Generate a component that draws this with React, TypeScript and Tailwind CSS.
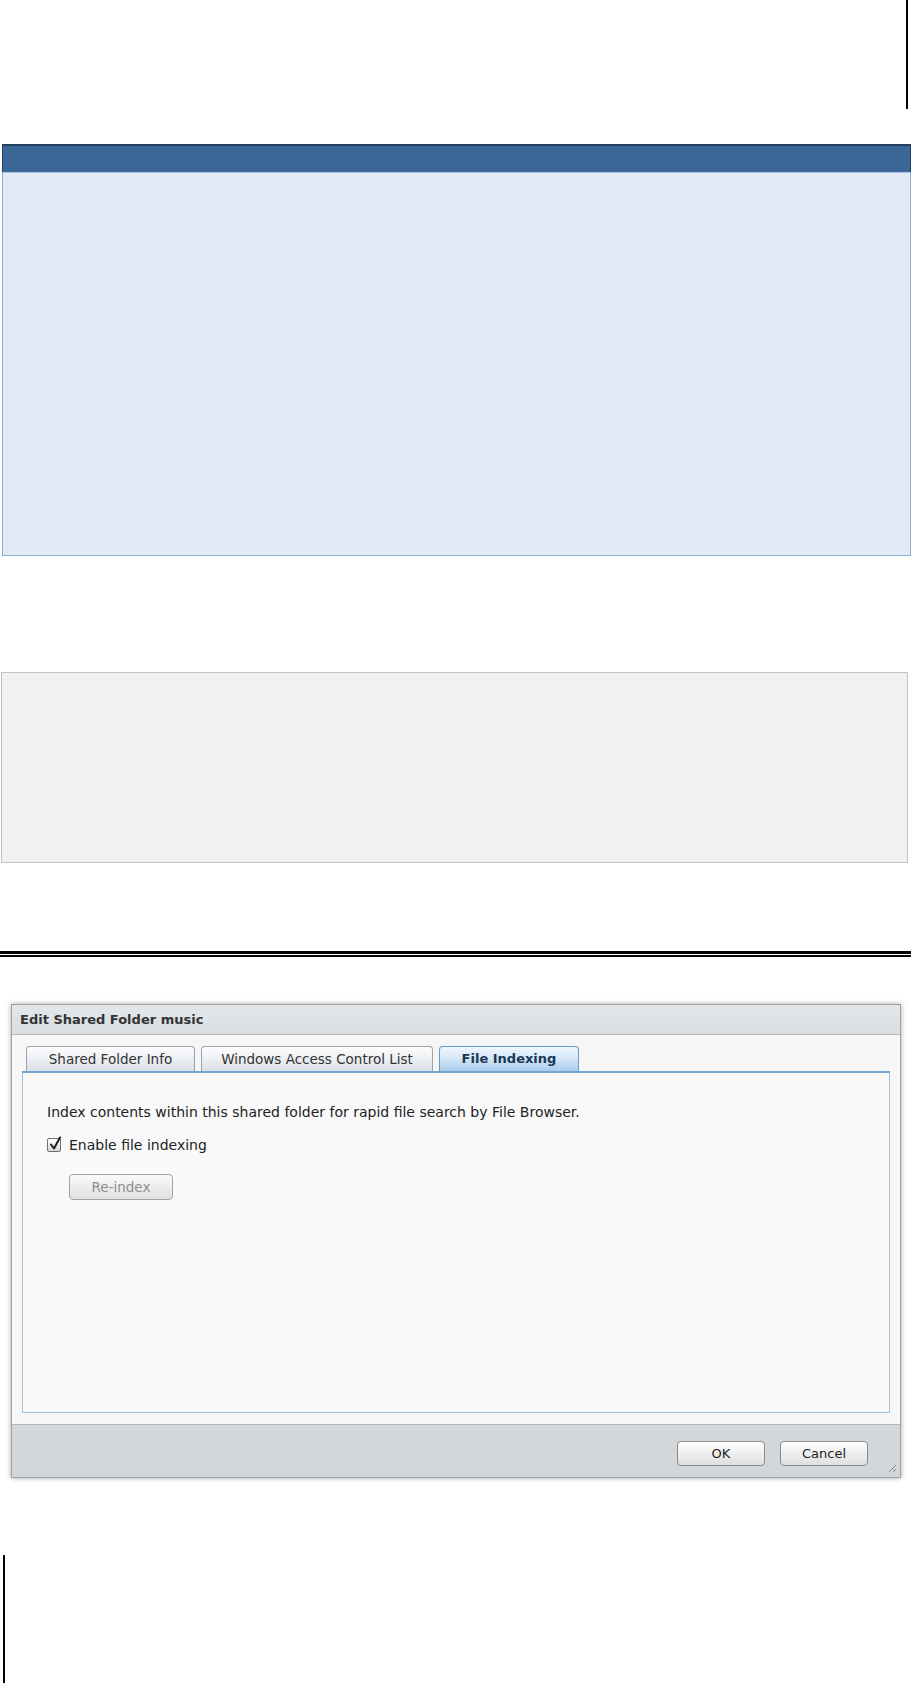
import React from "react";

const font = "font-['DejaVu_Sans','Verdana',sans-serif]";

function Tab({ label, width, active }: { label: string; width: string; active?: boolean }) {
  if (active) {
    return (
      <div
        className={`${width} h-[25px] rounded-t-[4px] border border-b-0 border-[#6a9ac6] bg-gradient-to-b from-[#f0f6fc] via-[#d3e6f7] to-[#a9cbeb] flex items-center justify-center text-[13px] font-bold text-[#1c3857]`}
      >
        {label}
      </div>
    );
  }
  return (
    <div
      className={`${width} h-[25px] rounded-t-[4px] border border-b-0 border-[#9aa4ae] bg-gradient-to-b from-[#fdfdfe] to-[#dbe1e8] flex items-center justify-center text-[13.5px] text-[#333]`}
    >
      {label}
    </div>
  );
}

function Button({ label, width, muted }: { label: string; width: string; muted?: boolean }) {
  return (
    <div
      className={`${width} h-[25px] rounded-[4px] border ${
        muted ? "border-[#a3a3a3] text-[#8f8f8f] text-[13.5px]" : "border-[#8a8a8a] text-[#222] text-[13px]"
      } bg-gradient-to-b from-[#fefefe] to-[#dfdfdf] flex items-center justify-center shadow-[inset_0_1px_0_#fff]`}
    >
      {label}
    </div>
  );
}

export default function App() {
  return (
    <div className={`w-[911px] h-[1683px] bg-white ${font} overflow-hidden`}>
      {/* top area with vertical rule */}
      <div className="h-[144px] flex justify-end pr-[3px]">
        <div className="w-[2px] h-[109px] bg-black" />
      </div>

      {/* blue box */}
      <div className="ml-[2px]">
        <div className="h-[28px] bg-[#3b6698] border-t-[2px] border-x border-[#23405f]" />
        <div className="h-[384px] bg-[#e3eaf5] border border-t-0 border-[#8db0da] shadow-[inset_0_1px_0_#a9c3e3]" />
      </div>

      <div className="h-[116px]" />

      {/* grey box */}
      <div className="ml-[1px] w-[907px] h-[191px] bg-[#f1f1f1] border-[1.5px] border-[#c2c2c2]" />

      <div className="h-[88px]" />

      {/* double rule */}
      <div className="h-[3px] bg-black" />
      <div className="h-[1px]" />
      <div className="h-[2px] bg-black" />

      <div className="h-[47px]" />

      {/* dialog */}
      <div className="ml-[11px] w-[890px] h-[474px] border border-[#9da1a5] shadow-[0_0_5px_rgba(0,0,0,0.35)] flex flex-col">
        <div className="h-[30px] bg-gradient-to-b from-[#e4e7ea] to-[#dadee2] border-b border-[#b3b7bb] flex items-center pl-[8px] text-[13px] font-bold text-[#333]">
          Edit Shared Folder music
        </div>
        <div className="h-[389px] bg-[#f6f6f6] pt-[11px] px-[10px] flex flex-col">
          <div className="h-[25px] flex items-end gap-[6px] pl-[4px]">
            <Tab label="Shared Folder Info" width="w-[169px]" />
            <Tab label="Windows Access Control List" width="w-[232px]" />
            <Tab label="File Indexing" width="w-[140px]" active />
          </div>
          <div className="h-[2px] bg-[#76a5cf]" />
          <div className="h-[340px] bg-[#f9f9f9] border border-t-0 border-[#9fc2df] pl-[24px] pt-[31px] flex flex-col items-start">
            <div className="h-[16px] leading-[16px] text-[14px] text-[#222]">
              Index contents within this shared folder for rapid file search by File Browser.
            </div>
            <div className="mt-[17px] h-[16px] flex items-center gap-[8px]">
              <div className="relative w-[14px] h-[14px] rounded-[2px] border border-[#6f6f6f] bg-gradient-to-b from-white to-[#d6d6d6]">
                <svg className="absolute left-[1px] top-[-3px]" width="13" height="15" viewBox="0 0 13 15">
                  <path d="M2 8.5 L5 12.5 L11 1.5" fill="none" stroke="#1f1f1f" strokeWidth="2" strokeLinecap="round" strokeLinejoin="round" />
                </svg>
              </div>
              <span className="text-[14px] leading-[16px] text-[#222]">Enable file indexing</span>
            </div>
            <div className="mt-[21px] ml-[22px] h-[26px] flex">
              <div className="w-[104px] h-[26px] rounded-[4px] border border-[#a3a3a3] text-[#8f8f8f] text-[13.5px] bg-gradient-to-b from-[#fafafa] to-[#e0e0e0] flex items-center justify-center">
                Re-index
              </div>
            </div>
          </div>
        </div>
        <div className="relative h-[53px] bg-[#d3d7db] border-t border-[#b2b6ba] flex justify-end items-start pt-[16px] pr-[32px] gap-[15px]">
          <Button label="OK" width="w-[88px]" />
          <Button label="Cancel" width="w-[88px]" />
          <svg className="absolute right-[3px] bottom-[4px]" width="10" height="10" viewBox="0 0 10 10">
            <path d="M9 2 L2 9 M9 6 L6 9" stroke="#7d8185" strokeWidth="1" fill="none" />
          </svg>
        </div>
      </div>

      <div className="h-[77px]" />

      {/* bottom-left rule */}
      <div className="ml-[3px] w-[1.5px] h-[128px] bg-black" />
    </div>
  );
}
